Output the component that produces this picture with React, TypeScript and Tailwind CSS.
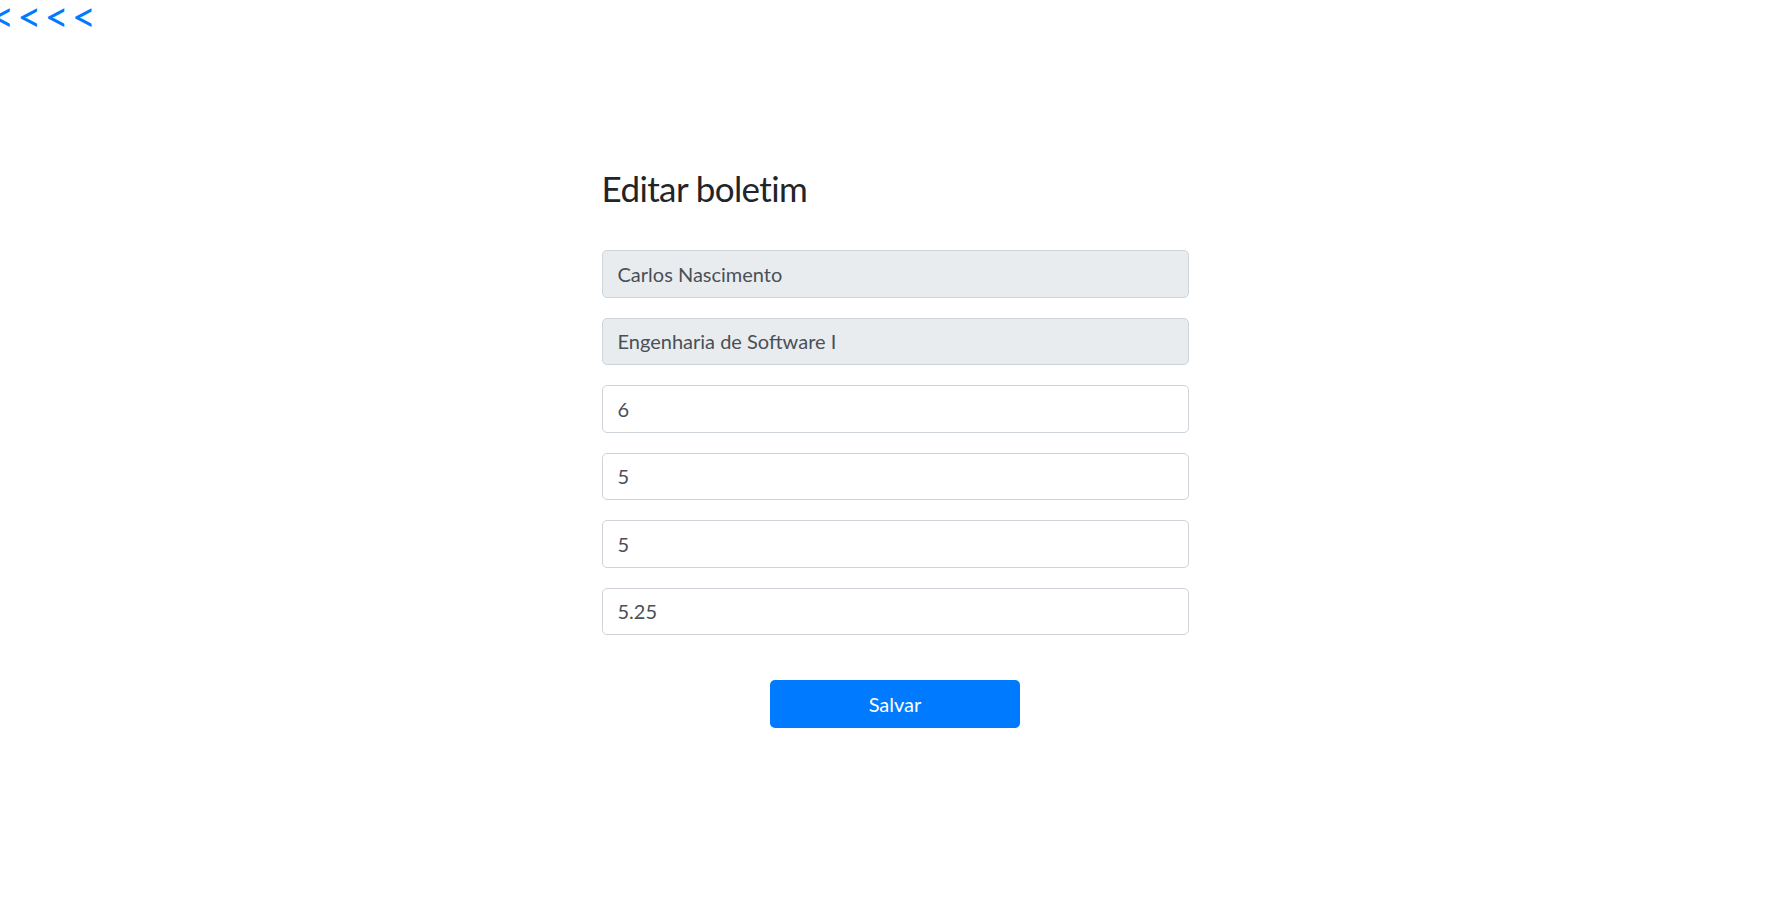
const fields = [
  { v: "Carlos Nascimento", d: true },
  { v: "Engenharia de Software I", d: true },
  { v: "6", d: false },
  { v: "5", d: false },
  { v: "5", d: false },
  { v: "5.25", d: false },
];

export default function App() {
  return (
    <div className="min-h-screen bg-white font-['Lato',sans-serif] overflow-hidden">
      <a href="#" className="block -ml-[10px] h-[30px] text-[42px] leading-[33px] tracking-[2.9px] text-[#007bff] no-underline whitespace-nowrap">
        &lt;&lt;&lt;&lt;
      </a>
      <div className="flex justify-center pl-[8px] pt-[137px]">
        <form className="w-[587px]" onSubmit={(e) => e.preventDefault()}>
          <h3 className="mb-[41px] text-[35px] font-normal leading-[42px] tracking-[-0.6px] text-[#212529]">Editar boletim</h3>
          {fields.map((f, i) => (
            <input
              key={i}
              readOnly
              defaultValue={f.v}
              className={`mb-[20px] block h-[47.5px] w-full rounded-[5px] border border-[#ced4da] px-[15px] text-[20px] text-[#495057] outline-none ${
                f.d ? "bg-[#e9ecef]" : "bg-white"
              }`}
            />
          ))}
          <div className="mt-[45px] flex justify-center">
            <button type="submit" className="h-[47.5px] w-[250px] rounded-[5px] bg-[#007bff] text-[20px] text-white">
              Salvar
            </button>
          </div>
        </form>
      </div>
    </div>
  );
}
